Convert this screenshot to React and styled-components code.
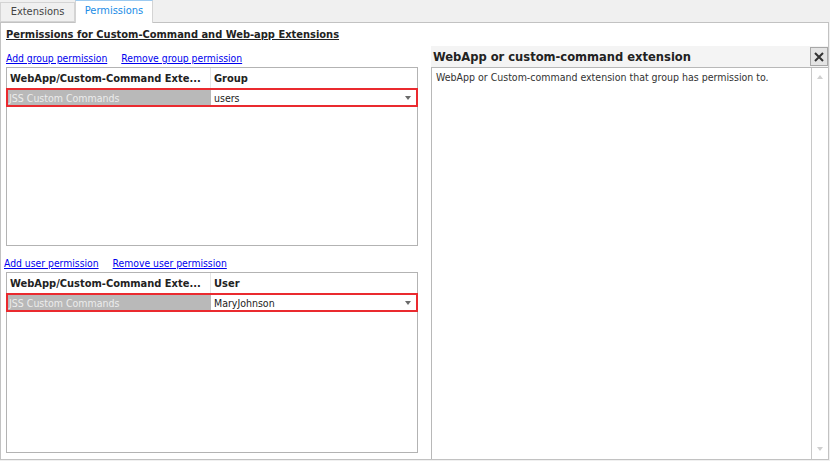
import React from 'react';
import styled, { createGlobalStyle } from 'styled-components';

const Global = createGlobalStyle`
  html, body { margin: 0; padding: 0; background: #f0f0f0; }
  body {
    font-family: "DejaVu Sans Condensed", "Liberation Sans", sans-serif;
    font-size: 11px;
    color: #222;
  }
  * { box-sizing: border-box; }
`;

const Window = styled.div`
  width: 830px;
  height: 461px;
  display: flex;
  flex-direction: column;
  background: #f0f0f0;
  padding: 0 1px 1px 0;
`;

const TabStrip = styled.div`
  height: 22px;
  display: flex;
  align-items: flex-end;
  position: relative;
  z-index: 2;
`;

const Tab = styled.div`
  height: ${p => (p.$active ? 23 : 20)}px;
  margin-bottom: ${p => (p.$active ? -1 : 0)}px;
  width: ${p => p.$w}px;
  display: flex;
  align-items: center;
  justify-content: center;
  background: ${p => (p.$active ? '#fff' : '#f0f0f0')};
  color: ${p => (p.$active ? '#1a8ce6' : '#444')};
  border: 1px solid #d4d4d4;
  border-bottom: ${p => (p.$active ? 'none' : '1px solid #d4d4d4')};
  border-top-color: ${p => (p.$active ? '#9ccaf0' : '#d4d4d4')};
  padding-bottom: ${p => (p.$active ? 3 : 1)}px;
  font-size: 11px;
`;

const Panel = styled.div`
  flex: 1;
  display: flex;
  background: #fff;
  border: 1px solid #c2c2c2;
`;

const LeftCol = styled.div`
  width: 412px;
  margin-left: 5px;
  display: flex;
  flex-direction: column;
`;

const Title = styled.div`
  margin-top: 5px;
  height: 14px;
  line-height: 14px;
  font-weight: bold;
  text-decoration: underline;
  color: #222;
  white-space: nowrap;
`;

const LinkRow = styled.div`
  margin-top: ${p => p.$top}px;
  margin-left: ${p => p.$left || 0}px;
  height: 14px;
  display: flex;
  gap: 14px;
`;

const Link = styled.a`
  color: #0000ee;
  text-decoration: underline;
  font-size: 10.3px;
  line-height: 14px;
  white-space: nowrap;
  cursor: pointer;
`;

const Grid = styled.div`
  margin-top: 2px;
  height: ${p => p.$h}px;
  border: 1px solid #b3b3b3;
  display: flex;
  flex-direction: column;
`;

const HeaderRow = styled.div`
  height: 20px;
  display: flex;
`;

const HeaderCell = styled.div`
  width: ${p => (p.$w ? `${p.$w}px` : 'auto')};
  flex: ${p => (p.$w ? 'none' : 1)};
  padding-left: 3px;
  display: flex;
  align-items: center;
  font-weight: bold;
  color: #222;
  border-right: ${p => (p.$w ? '1px solid #e6e6e6' : 'none')};
  white-space: nowrap;
  overflow: hidden;
`;

const SelRow = styled.div`
  height: 19px;
  margin: 0 -1px;
  border: 2px solid #ea2a2f;
  display: flex;
  font-size: 10.5px;
`;

const KeyCell = styled.div`
  width: 203px;
  background: #b9b9b9;
  color: #ececec;
  padding-left: 1px;
  display: flex;
  align-items: center;
  white-space: nowrap;
`;

const ValueCell = styled.div`
  flex: 1;
  display: flex;
  align-items: center;
  justify-content: space-between;
  padding: 0 5px 0 3px;
  color: #222;
  background: #fff;
`;

const Arrow = styled.span`
  width: 0;
  height: 0;
  border-left: 3.5px solid transparent;
  border-right: 3.5px solid transparent;
  border-top: 4px solid ${p => p.$c || '#6a6a6a'};
`;

const UpArrow = styled.span`
  width: 0;
  height: 0;
  border-left: 3.5px solid transparent;
  border-right: 3.5px solid transparent;
  border-bottom: 4px solid #d0d0d0;
`;

const RightCol = styled.div`
  flex: 1;
  margin-left: 13px;
  padding-top: 23px;
  display: flex;
  flex-direction: column;
`;

const RHeader = styled.div`
  height: 21px;
  display: flex;
  align-items: center;
  justify-content: space-between;
  background: #f4f4f4;
  padding-left: 2px;
`;

const RTitle = styled.div`
  font-size: 12.8px;
  font-weight: bold;
  color: #222;
`;

const CloseBtn = styled.div`
  width: 18px;
  height: 19px;
  border: 1px solid #a8a8a8;
  background: #e4e4e4;
  display: flex;
  align-items: center;
  justify-content: center;
`;

const TextBox = styled.div`
  flex: 1;
  border-top: 1px solid #b8b8b8;
  border-left: 1px solid #b8b8b8;
  display: flex;
`;

const TextArea = styled.div`
  flex: 1;
  padding: 2px 4px;
  font-size: 10.5px;
  line-height: 14px;
  color: #333;
`;

const ScrollBar = styled.div`
  width: 17px;
  border-left: 1px solid #c8c8c8;
  display: flex;
  flex-direction: column;
  justify-content: space-between;
  align-items: center;
  padding: 7px 0 8px;
`;

function PermGrid({ h, header, value }) {
  return (
    <Grid $h={h}>
      <HeaderRow>
        <HeaderCell $w={204}>WebApp/Custom-Command Exte...</HeaderCell>
        <HeaderCell>{header}</HeaderCell>
      </HeaderRow>
      <SelRow>
        <KeyCell>JSS Custom Commands</KeyCell>
        <ValueCell>
          <span>{value}</span>
          <Arrow />
        </ValueCell>
      </SelRow>
    </Grid>
  );
}

export default function App() {
  return (
    <>
      <Global />
      <Window>
        <TabStrip>
          <Tab $w={75}>Extensions</Tab>
          <Tab $w={78} $active>Permissions</Tab>
        </TabStrip>
        <Panel>
          <LeftCol>
            <Title>Permissions for Custom-Command and Web-app Extensions</Title>
            <LinkRow $top={9}>
              <Link>Add group permission</Link>
              <Link>Remove group permission</Link>
            </LinkRow>
            <PermGrid h={179} header="Group" value="users" />
            <LinkRow $top={10} $left={-2}>
              <Link>Add user permission</Link>
              <Link>Remove user permission</Link>
            </LinkRow>
            <PermGrid h={181} header="User" value="MaryJohnson" />
          </LeftCol>
          <RightCol>
            <RHeader>
              <RTitle>WebApp or custom-command extension</RTitle>
              <CloseBtn>
                <svg width="10" height="10" viewBox="0 0 10 10">
                  <path d="M1 1L9 9M9 1L1 9" stroke="#333" strokeWidth="2" />
                </svg>
              </CloseBtn>
            </RHeader>
            <TextBox>
              <TextArea>WebApp or Custom-command extension that group has permission to.</TextArea>
              <ScrollBar>
                <UpArrow />
                <Arrow $c="#cfcfcf" />
              </ScrollBar>
            </TextBox>
          </RightCol>
        </Panel>
      </Window>
    </>
  );
}
